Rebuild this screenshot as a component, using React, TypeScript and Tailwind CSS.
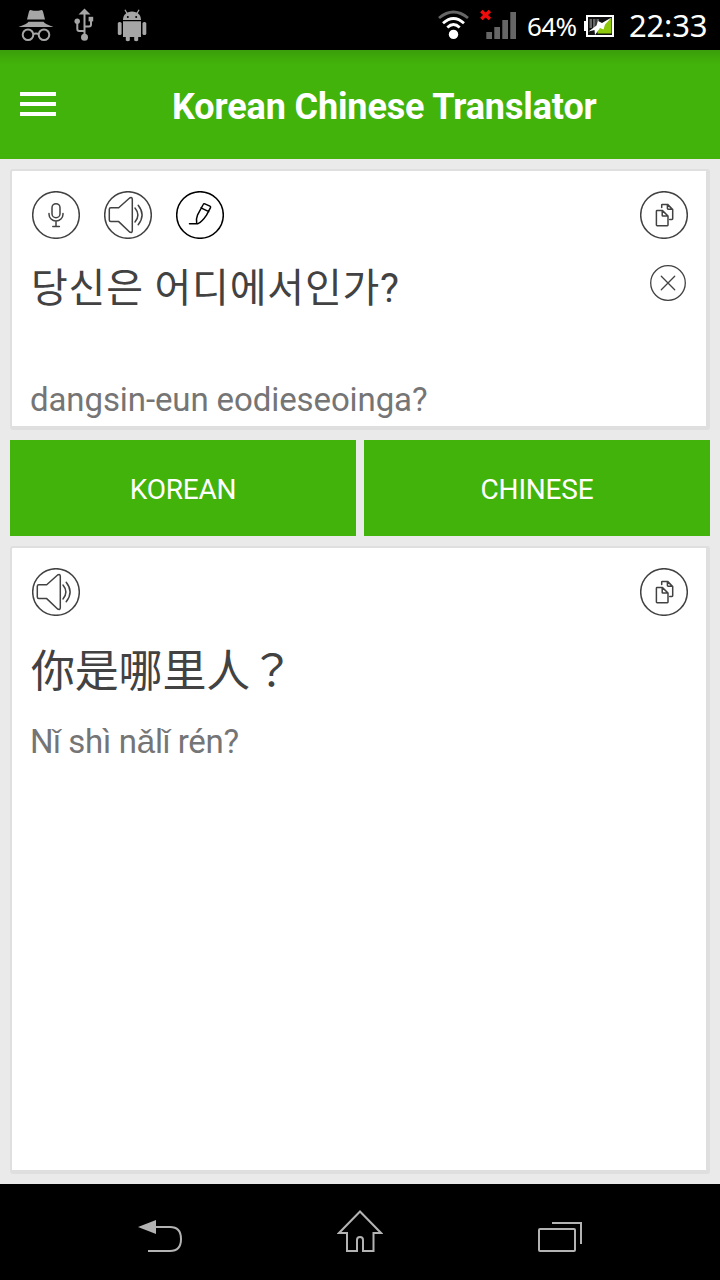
import React from 'react';

interface IconProps {
  className?: string;
}

interface RoundButtonProps {
  label: string;
  className?: string;
  children: React.ReactNode;
}

const RoundButton: React.FC<RoundButtonProps> = ({ label, className = 'text-[#424242]', children }) => (
  <button type="button" aria-label={label} className={className}>
    <svg className="block size-12" viewBox="0 0 48 48" fill="none" stroke="currentColor" strokeWidth="1.5" strokeLinecap="round" strokeLinejoin="round">
      <circle cx="24" cy="24" r="23.3" />
      {children}
    </svg>
  </button>
);

const MicButton = () => (
  <RoundButton label="Microphone">
    <rect x="20" y="12.7" width="8" height="14" rx="4" />
    <path d="M17 22.5v.8a7 6.7 0 0 0 14 0v-.8M24 30v5.3M20.8 35.4h6.6" />
  </RoundButton>
);

const SpeakerButton = () => (
  <RoundButton label="Listen">
    <path d="M6.8 16.7h7.9L25.6 7q2.6-1.2 2.7 1.3v31.4q-.1 2.5-2.7 1.3L14.7 30.6H6.8q-1.5 0-1.5-1.5V18.2q0-1.5 1.5-1.5z" />
    <path d="M31 17q5.8 7 0 14M34.2 14.3q7.8 9.7 0 19.4" />
  </RoundButton>
);

const PenButton = () => (
  <RoundButton label="Write" className="text-black">
    <path d="M13.5 32.7h8.5c4-2 6.5-5.5 8.5-8.500l4-7.500q.4-1-.6-1.600l-5-2.200q-1.200-.4-1.700.6l-5.600 10.300c-1.300 3-1.300 6-.9 8.500M25 16.800l7.800 3.800" />
  </RoundButton>
);

const CopyButton = () => (
  <RoundButton label="Copy">
    <path d="M22.500 19.600h-5.400q-.7 0-.7.700v13.700q0 .7.700.7h10.200q.7 0 .7-.7v-9l-5.500-5.400M22.200 19.800v4.600q0 .6.600.6h5" />
    <path d="M21.700 16.600v-2.600q0-.6.600-.6h5.300l5.100 5.200v9.100q0 .7-.7.700h-2.300M27.400 13.600v4q0 .7.700.7h4.500" />
  </RoundButton>
);

const CloseButton = () => (
  <button type="button" aria-label="Clear" className="text-[#424242]">
    <svg className="block size-9" viewBox="0 0 36 36" fill="none" stroke="currentColor" strokeWidth="1.3" strokeLinecap="round">
      <circle cx="18" cy="18" r="17.3" />
      <path d="M11.3 11.3l13.4 13.4M24.7 11.3L11.3 24.7" />
    </svg>
  </button>
);

const IncognitoIcon: React.FC<IconProps> = ({ className }) => (
  <svg className={className} viewBox="0 0 36 34" fill="#a6a6a6">
    <path d="M9 11.500l2-8Q11.600 1.800 13.400 2.200q4.600 1 9.200 0Q24.400 1.800 25 3.500L27 11.500z" />
    <path d="M.5 19Q9 16 10.500 13.800h15q1.500 2.200 10 5.200z" />
    <g fill="none" stroke="#a6a6a6" strokeWidth="2">
      <circle cx="10" cy="26.8" r="5.3" />
      <circle cx="26" cy="26.8" r="5.3" />
      <path d="M15 26q3-1 6 0" />
    </g>
  </svg>
);

const UsbIcon: React.FC<IconProps> = ({ className }) => (
  <svg className={className} viewBox="0 0 20 34" fill="#a6a6a6">
    <path d="M10.500 .5l6 6h-12z" />
    <circle cx="10.500" cy="29.300" r="3.500" />
    <circle cx="3.200" cy="13.300" r="2.700" />
    <rect x="14.600" y="8.800" width="4.600" height="4.600" />
    <path d="M10.500 5v22M3.300 14v7q0 2 2 2h4.200M17 12v4.500q0 2-2 2h-3.500" fill="none" stroke="#a6a6a6" strokeWidth="2" />
  </svg>
);

const AndroidIcon: React.FC<IconProps> = ({ className }) => (
  <svg className={className} viewBox="0 0 30 34" fill="#a6a6a6">
    <path d="M6 12C6 7 9.500 3.500 15 3.500s9 3.500 9 8.500z" />
    <path d="M8 1.700l2.200 4M22 1.700l-2.200 4" stroke="#a6a6a6" strokeWidth="1.300" />
    <circle cx="10.800" cy="9" r="1" fill="#000" />
    <circle cx="19.200" cy="9" r="1" fill="#000" />
    <rect x=".8" y="14" width="3.800" height="13" rx="1.600" />
    <rect x="25.500" y="14" width="3.800" height="13" rx="1.600" />
    <path d="M6 13.300h18V29h-2.800v3.500q-2 1.500-4 0V29h-4.400v3.500q-2 1.500-4 0V29H6z" />
  </svg>
);

const WifiIcon: React.FC<IconProps> = ({ className }) => (
  <svg className={className} viewBox="0 0 32 30" fill="none" strokeWidth="2.8">
    <path d="M1 8q14.500-12 29 0" stroke="#666" />
    <path d="M5 13.200q10.500-9.500 21 0M9.300 17.600q6.200-6 12.400 0" stroke="#fff" />
    <circle cx="15.500" cy="24.400" r="4.700" fill="#fff" />
  </svg>
);

const SignalIcon: React.FC<IconProps> = ({ className }) => (
  <svg className={className} viewBox="0 0 38 32">
    <path d="M6.300 25h5.700v7H6.300zM14.300 20H20v12h-5.700zM22.300 13H28v19h-5.700zM30.300 5H36v27h-5.700z" fill="#666" />
    <path d="M1.300 4l8.600 8M9.900 4L1.300 12" stroke="#f00c0c" strokeWidth="3.600" />
  </svg>
);

const BatteryIcon: React.FC<IconProps> = ({ className }) => (
  <svg className={className} viewBox="0 0 30 22">
    <path d="M0 6h3v10H0z" fill="#fff" />
    <rect x="3" y="1" width="26" height="20" fill="#111" stroke="#fff" strokeWidth="2" />
    <path d="M5.500 4H8v9H5.500zM9 4h2.500v9H9zM12.500 4H15v9h-2.500z" fill="#666" />
    <path d="M27.500 3v15.500H13.500V12z" fill="#8dc80c" />
    <path d="M27.500 2.500L18 8l-4-2-1.500 4.500-8 6 6-1.500.5 5L16 13l3.500 1.500 1.500-5z" fill="#fff" />
  </svg>
);

const StatusBar = () => (
  <div className="flex h-[50px] items-start bg-black font-['Noto_Sans',sans-serif] text-white">
    <IncognitoIcon className="mt-2 ml-[18px] h-[34px] w-9 shrink-0" />
    <UsbIcon className="mt-2 ml-5 h-[34px] w-5 shrink-0" />
    <AndroidIcon className="mt-2 ml-[23px] h-[34px] w-[30px] shrink-0" />
    <WifiIcon className="mt-[10px] ml-[291px] h-[30px] w-8 shrink-0" />
    <SignalIcon className="mt-[7px] ml-[10px] h-8 w-[38px] shrink-0" />
    <span className="ml-[9px] w-[57px] shrink-0 text-[26px] leading-[52px] tracking-[-0.6px]">64%</span>
    <BatteryIcon className="mt-[15px] h-[22px] w-[30px] shrink-0" />
    <span className="ml-[15px] shrink-0 whitespace-nowrap text-[31px] leading-[51px] tracking-[-0.2px]">22:33</span>
  </div>
);

const Header = () => (
  <header className="flex h-[109px] items-center bg-[#42b30a] bg-[linear-gradient(#3a9e0a,#42b30a_14px)]">
    <button type="button" aria-label="Menu" className="mb-0.5 ml-5 flex w-9 flex-col gap-1.5">
      <span className="h-1 bg-white" />
      <span className="h-1 bg-white" />
      <span className="h-1 bg-white" />
    </button>
    <h1 className="ml-[116px] whitespace-nowrap pt-[5px] text-[36px] leading-10 font-bold tracking-[-0.13px] text-white">Korean Chinese Translator</h1>
  </header>
);

const NavBar = () => (
  <nav className="flex h-24 items-start bg-black">
    <svg className="mt-[34px] ml-[137px] h-9 w-[46px]" viewBox="0 0 46 36" fill="none" stroke="#b3b3b3" strokeWidth="2">
      <path d="M1 9l18-7v14z" fill="#b3b3b3" stroke="none" />
      <path d="M18 9h15c7 0 11 4 11 12s-4 12-11 12H11" />
    </svg>
    <svg className="mt-[26px] ml-[154px] h-[44px] w-[46px]" viewBox="0 0 46 44" fill="none" stroke="#b3b3b3" strokeWidth="2">
      <path d="M23 1.500L2 23H10V41h10V30q0-3 3-3t3 3v11h10.500V23H44z" />
    </svg>
    <svg className="mt-[37px] ml-[155px] h-8 w-[44px]" viewBox="0 0 44 32" fill="none" stroke="#b3b3b3" strokeWidth="2">
      <rect x="1" y="8" width="36" height="22" rx="1" />
      <path d="M14 2h29v21" />
    </svg>
  </nav>
);

const App: React.FC = () => {
  return (
    <div className="flex h-[1280px] w-[720px] flex-col overflow-hidden bg-[#eaeaea] font-[Roboto,sans-serif]">
      <StatusBar />
      <Header />

      <main className="flex flex-1 flex-col gap-[10px] p-[10px]">
        <section className="flex h-[261px] flex-col rounded-[3px] border-t-2 border-r-4 border-b-4 border-l-2 border-[#dfdfdf] bg-white pt-5 pr-[18px] pl-5">
          <div className="flex justify-between">
            <div className="flex gap-6">
              <MicButton />
              <SpeakerButton />
              <PenButton />
            </div>
            <CopyButton />
          </div>
          <div className="mt-[26px] flex h-12 items-start justify-between pr-0.5">
            <p className="-mt-0.5 -ml-px whitespace-nowrap font-[Roboto,'Noto_Sans_CJK_KR',sans-serif] text-[40px] leading-[52px] tracking-[0.8px] text-[#424242]">당신은 어디에서인가?</p>
            <CloseButton />
          </div>
          <p className="mt-[67px] -ml-0.5 whitespace-nowrap text-[33px] leading-10 tracking-[-0.1px] text-[#757575]">dangsin-eun eodieseoinga?</p>
        </section>

        <div className="flex h-24 gap-2 text-[28px] tracking-[-0.2px] text-white">
          <button type="button" className="flex-1 bg-[#42b30a] pt-1">KOREAN</button>
          <button type="button" className="flex-1 bg-[#42b30a] pt-1">CHINESE</button>
        </div>

        <section className="flex flex-1 flex-col rounded-[3px] border-t-2 border-r-4 border-b-4 border-l-2 border-[#dfdfdf] bg-white pt-5 pr-[18px] pl-5">
          <div className="flex justify-between">
            <SpeakerButton />
            <CopyButton />
          </div>
          <p lang="zh" className="mt-[22px] -ml-px whitespace-nowrap font-['Noto_Sans_CJK_SC',sans-serif] text-[44px] leading-[60px] tracking-[-0.2px] text-[#424242]">
            你是哪里人<span lang="zh-TW" className="font-['Noto_Sans_CJK_TC',sans-serif]">？</span>
          </p>
          <p className="mt-6 -ml-0.5 whitespace-nowrap text-[33px] leading-10 tracking-[-0.25px] text-[#757575]">Nǐ shì nǎlǐ rén?</p>
        </section>
      </main>

      <NavBar />
    </div>
  );
};

export default App;
